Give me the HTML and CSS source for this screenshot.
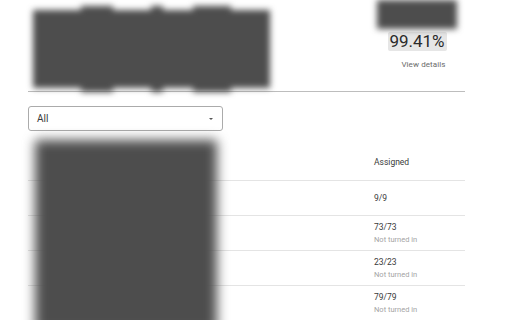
FILE: index.html
```html
<!DOCTYPE html>
<html>
<head>
<meta charset="utf-8">
<link rel="stylesheet" href="styles.css">
</head>
<body>
<div class="page">
  <div class="summary">
    <div class="redact-title">
      <span class="bump bump-a"></span>
      <span class="bump bump-b"></span>
      <span class="bump bump-c"></span>
    </div>
    <div class="stat">
      <div class="redact-stat"></div>
      <div class="chip">99.41%</div>
      <div class="details">View details</div>
    </div>
  </div>
  <div class="filter">
    <span class="filter-label">All</span>
    <span class="caret"></span>
  </div>
  <div class="table">
    <div class="row head"><div class="c1"></div><div class="c2">Assigned</div></div>
    <div class="row single"><div class="c1"></div><div class="c2"><div class="val">9/9</div></div></div>
    <div class="row"><div class="c1"></div><div class="c2"><div class="val">73/73</div><div class="sub">Not turned in</div></div></div>
    <div class="row"><div class="c1"></div><div class="c2"><div class="val">23/23</div><div class="sub">Not turned in</div></div></div>
    <div class="row"><div class="c1"></div><div class="c2"><div class="val">79/79</div><div class="sub">Not turned in</div></div></div>
    <div class="redact-list"></div>
  </div>
</div>
</body>
</html>
```

FILE: styles.css
```css
html, body {
  margin: 0;
  padding: 0;
  background: #fff;
  overflow: hidden;
}
body {
  font-family: Roboto, "Liberation Sans", sans-serif;
  color: #333;
  width: 512px;
  height: 320px;
}
.page {
  margin-left: 28px;
  width: 437px;
}
.summary {
  display: flex;
  height: 91px;
  border-bottom: 1px solid #bdbdbd;
}
.redact-title {
  position: relative;
  margin-left: 5px;
  margin-top: 10px;
  width: 237px;
  height: 78px;
  background: #4d4d4d;
  filter: blur(3px);
}
.bump {
  position: absolute;
  top: -4px;
  bottom: -4px;
  background: #4d4d4d;
}
.bump-a { left: 48px; width: 32px; }
.bump-b { left: 118px; width: 12px; }
.bump-c { left: 160px; width: 38px; }
.stat {
  margin-left: auto;
  margin-right: 8px;
  width: 80px;
  display: flex;
  flex-direction: column;
  align-items: center;
}
.redact-stat {
  width: 80px;
  height: 29px;
  background: #4d4d4d;
  filter: blur(3px);
}
.chip {
  margin-top: 3px;
  width: 59px;
  height: 19px;
  background: #e6e6e6;
  border-radius: 2px;
  font-size: 17px;
  line-height: 19px;
  text-align: center;
  color: #2a2a2a;
}
.details {
  margin-top: 9px;
  margin-left: 13px;
  font-size: 8px;
  line-height: 10px;
  color: #6a6a6a;
  letter-spacing: 0.1px;
}
.filter {
  margin-top: 14px;
  width: 193px;
  height: 23px;
  border: 1px solid #ababab;
  border-radius: 3px;
  display: flex;
  align-items: center;
  padding: 0;
}
.filter-label {
  margin-left: 8px;
  font-size: 10px;
  color: #3a3a3a;
}
.caret {
  margin-left: auto;
  margin-right: 9px;
  width: 0;
  height: 0;
  border-left: 2.5px solid transparent;
  border-right: 2.5px solid transparent;
  border-top: 2.5px solid #555;
}
.table {
  position: relative;
}
.row {
  display: grid;
  grid-template-columns: 1fr 91px;
  height: 34px;
  border-bottom: 1px solid #e4e4e4;
}
.row.head {
  height: 49px;
  align-items: end;
}
.head .c2 {
  font-size: 8.5px;
  line-height: 10px;
  padding-bottom: 13px;
  color: #3a3a3a;
}
.c2 {
  padding-top: 6px;
}
.head .c2 { padding-top: 0; }
.single .c2 {
  padding-top: 12px;
}
.val {
  font-size: 8.5px;
  line-height: 10px;
  color: #3a3a3a;
}
.sub {
  margin-top: 3px;
  font-size: 7.5px;
  line-height: 10px;
  color: #a4a4a4;
}
.redact-list {
  position: absolute;
  left: 7px;
  top: 9px;
  width: 182px;
  height: 192px;
  background: #4d4d4d;
  filter: blur(6px);
}
```
